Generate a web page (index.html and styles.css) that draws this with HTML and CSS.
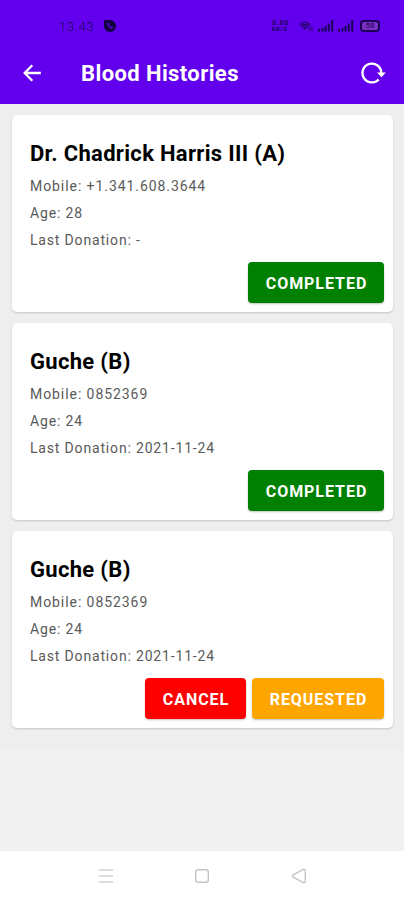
FILE: index.html
```html
<!DOCTYPE html>
<html lang="en">
<head>
<meta charset="utf-8">
<title>Blood Histories</title>
<link rel="stylesheet" href="styles.css">
</head>
<body>
<div class="screen">
  <header class="top">
    <div class="status">
      <span class="clock">13.43</span>
      <svg class="app-dot" width="14" height="14" viewBox="0 0 14 14"><path d="M1 1h6a6 6 0 1 1-6 6z" fill="#10003f"/><path d="M4.3 4.2c0 3 2.2 5.400 5.200 5.400l.6-1.500-1.700-.9-.8.7c-.9-.4-1.500-1.100-1.800-2l.8-.7-.8-1.500z" fill="#6200ee"/></svg>
      <div class="indicators">
        <div class="speed"><span>0.80</span><span>KB/S</span></div>
        <svg width="15" height="12" viewBox="0 0 15 12"><path d="M0 4.200Q6 -1 12 4.200L6 10z" fill="#2a0078"/><path d="M1.500 5.200Q6 1.500 10.500 5.200M3.500 7Q6 5 8.500 7" fill="none" stroke="#6200ee" stroke-width=".8"/><path d="M10.500 7v4M13 6.500v4.500" stroke="#2a0078" stroke-width="1.200"/></svg>
        <svg class="signal" width="16" height="12" viewBox="0 0 16 12"><path d="M0 9h2v2.500H0zM3.500 8h2v3.500h-2zM6.500 6h2v5.500h-2zM9.800 3.500h2v8h-2zM13.200 0h2v11.500h-2z" fill="#1c0058"/></svg>
        <svg class="signal" width="16" height="12" viewBox="0 0 16 12"><path d="M0 9h2v2.500H0zM3.500 8h2v3.500h-2zM6.500 6h2v5.500h-2zM9.800 3.500h2v8h-2zM13.200 0h2v11.500h-2z" fill="#1c0058"/></svg>
        <div class="battery">58</div>
      </div>
    </div>
    <div class="bar">
      <svg class="back" width="20" height="20" viewBox="0 0 20 20"><path d="M18.800 9H3.200M10.300 1.300L2.700 9l7.600 7.700" fill="none" stroke="#fff" stroke-width="2.300"/></svg>
      <h1>Blood Histories</h1>
      <svg class="reload" width="26" height="24" viewBox="0 0 26 24"><path d="M18.700 17.500A9.400 9.400 0 1 1 21.300 11" fill="none" stroke="#fff" stroke-width="2.300"/><path d="M17 10.500h8.800l-4.400 4.700z" fill="#fff"/></svg>
    </div>
  </header>
  <main class="content">
    <section class="card">
      <h2>Dr. Chadrick Harris III (A)</h2>
      <p class="phone">Mobile: +1.341.608.3644</p>
      <p>Age: 28</p>
      <p>Last Donation: -</p>
      <div class="actions"><button class="completed">COMPLETED</button></div>
    </section>
    <section class="card">
      <h2>Guche (B)</h2>
      <p class="phone">Mobile: 0852369</p>
      <p>Age: 24</p>
      <p>Last Donation: 2021-11-24</p>
      <div class="actions"><button class="completed">COMPLETED</button></div>
    </section>
    <section class="card">
      <h2>Guche (B)</h2>
      <p class="phone">Mobile: 0852369</p>
      <p>Age: 24</p>
      <p>Last Donation: 2021-11-24</p>
      <div class="actions"><button class="cancel">CANCEL</button><button class="requested">REQUESTED</button></div>
    </section>
  </main>
  <nav class="nav">
    <svg width="16" height="16" viewBox="0 0 16 16"><path d="M1 2h14M1 8h14M1 14h14" stroke="#d2d2d2" stroke-width="1.700"/></svg>
    <svg width="16" height="16" viewBox="0 0 16 16"><rect x="1.700" y="1.700" width="12.600" height="12.600" rx="2.300" fill="none" stroke="#c4c4c4" stroke-width="1.400"/></svg>
    <svg width="16" height="16" viewBox="0 0 16 16"><path d="M1.800 7.200L12.300 1.500Q14.300 .8 14.300 3v10q0 2.200-2 1.500L1.800 8.800Q.8 8 1.800 7.200z" fill="none" stroke="#c4c4c4" stroke-width="1.400"/></svg>
  </nav>
</div>
</body>
</html>
```
FILE: styles.css
```css
* { box-sizing: border-box; }
body { margin: 0; font-family: Roboto, "Liberation Sans", sans-serif; }
h1, h2, p { margin: 0; }
svg { display: block; flex: none; }
.screen { width: 404px; height: 900px; display: flex; flex-direction: column; background: #f1f1f1; overflow: hidden; }
.top { height: 104px; flex: none; background: #6200ee; }
.status { height: 44px; padding: 8px 24px 0 59px; display: flex; align-items: center; color: #1c0058; }
.clock { width: 44px; font-size: 13px; font-weight: 300; letter-spacing: .7px; }
.indicators { margin-left: auto; display: flex; align-items: center; }
.speed { width: 20px; margin-right: 7px; display: flex; flex-direction: column; font-size: 7px; line-height: 8px; font-weight: 700; letter-spacing: .7px; }
.speed span { height: 6px; line-height: 6px; }
.speed span + span { font-size: 5.500px; letter-spacing: .8px; }
.signal { margin-left: 4px; }
.battery { width: 20px; height: 12px; margin-left: 6px; border: 2px solid #1c0058; border-radius: 4px; background: #7b32c4; font-size: 8px; line-height: 8px; text-align: center; }
.bar { height: 59px; padding: 0 18px 0 22px; display: flex; align-items: center; color: #fff; }
h1 { margin-left: 39px; font-size: 22px; line-height: 30px; font-weight: 700; letter-spacing: .4px; }
.reload { margin-left: auto; }
.content { height: 646px; flex: none; padding: 11px 11px 0 12px; display: flex; flex-direction: column; gap: 11px; background: #eee; }
.card { height: 197px; flex: none; padding: 24px 9px 0 18px; border-radius: 5px; background: #fff; box-shadow: 0 1px 2px rgba(0,0,0,.18); }
h2 { height: 34px; font-size: 22px; line-height: 30px; font-weight: 700; letter-spacing: .31px; color: #000; }
.card p { height: 27px; font-size: 14px; line-height: 27px; letter-spacing: .83px; color: #5a5a5a; }
.card .phone { letter-spacing: .93px; }
.actions { display: flex; justify-content: flex-end; gap: 6px; margin-top: 8px; }
button { height: 41px; padding: 2px 0 0 1px; border: 0; border-radius: 4px; color: #fff; font: 700 16px/39px Roboto, sans-serif; letter-spacing: .95px; box-shadow: 0 1px 2px rgba(0,0,0,.25); }
.completed { width: 136px; background: #008000; }
.cancel { width: 101px; background: #f00; }
.requested { width: 132px; background: #ffa500; }
.nav { height: 49px; margin-top: auto; flex: none; display: flex; justify-content: center; align-items: center; gap: 80.500px; background: #fff; }
```
